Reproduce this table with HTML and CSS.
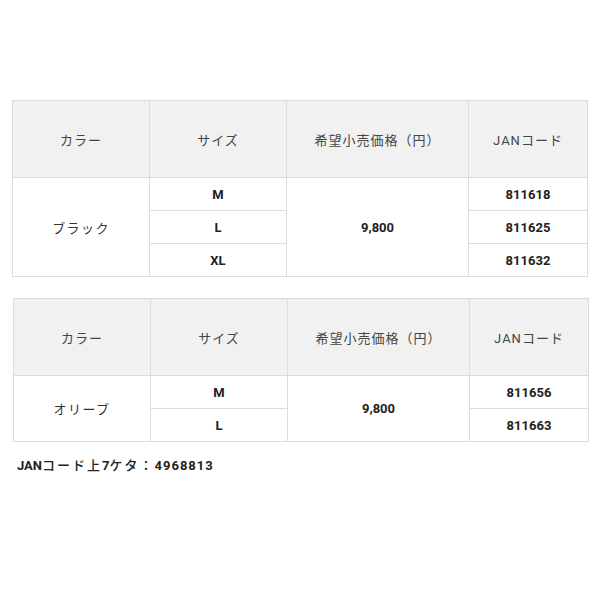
FILE: index.html
```html
<!DOCTYPE html>
<html lang="ja">
<head>
<meta charset="utf-8">
<link rel="stylesheet" href="styles.css">
</head>
<body>
<div class="wrap">
  <table class="spec">
    <colgroup><col class="c1"><col class="c2"><col class="c3"><col class="c4"></colgroup>
    <tr class="head"><th>カラー</th><th>サイズ</th><th>希望小売価格（円）</th><th>JANコード</th></tr>
    <tr><td rowspan="3" class="kana">ブラック</td><td class="num">M</td><td rowspan="3" class="num">9,800</td><td class="num">811618</td></tr>
    <tr><td class="num">L</td><td class="num">811625</td></tr>
    <tr><td class="num">XL</td><td class="num">811632</td></tr>
  </table>
  <table class="spec second">
    <colgroup><col class="c1"><col class="c2"><col class="c3"><col class="c4"></colgroup>
    <tr class="head"><th>カラー</th><th>サイズ</th><th>希望小売価格（円）</th><th>JANコード</th></tr>
    <tr><td rowspan="2" class="kana">オリーブ</td><td class="num">M</td><td rowspan="2" class="num">9,800</td><td class="num">811656</td></tr>
    <tr><td class="num">L</td><td class="num">811663</td></tr>
  </table>
  <p class="note">JAN<span class="jp">コード上</span>7<span class="jp">ケタ：</span><span class="digits">4968813</span></p>
</div>
</body>
</html>
```
FILE: styles.css
```css
html, body { margin: 0; padding: 0; background: #fff; }
body {
  font-family: Roboto, "Noto Sans CJK JP", sans-serif;
  color: #333;
  font-size: 13px;
}
.wrap { padding: 100px 13px 0 12px; }
.spec {
  border-collapse: collapse;
  width: 575px;
  table-layout: fixed;
}
.spec.second { margin-top: 21px; margin-left: 1px; width: 574px; }
.c1 { width: 137px; }
.c2 { width: 137px; }
.c3 { width: 182px; }
.c4 { width: 119px; }
.spec th, .spec td {
  border: 1px solid #dcdcdc;
  text-align: center;
  padding: 0;
}
.spec th {
  background: #f1f1f1;
  height: 76px;
  font-weight: 400;
  color: #444;
  letter-spacing: 1px;
}
.spec td { height: 32px; }
.kana { letter-spacing: 1.4px; color: #333; }
.num { font-weight: 700; color: #222; }
.note {
  margin: 13px 0 0 5px;
  font-weight: 700;
  color: #222;
}
.note .jp { letter-spacing: 2px; font-weight: 500; }
.note .digits { letter-spacing: 1px; }
```
